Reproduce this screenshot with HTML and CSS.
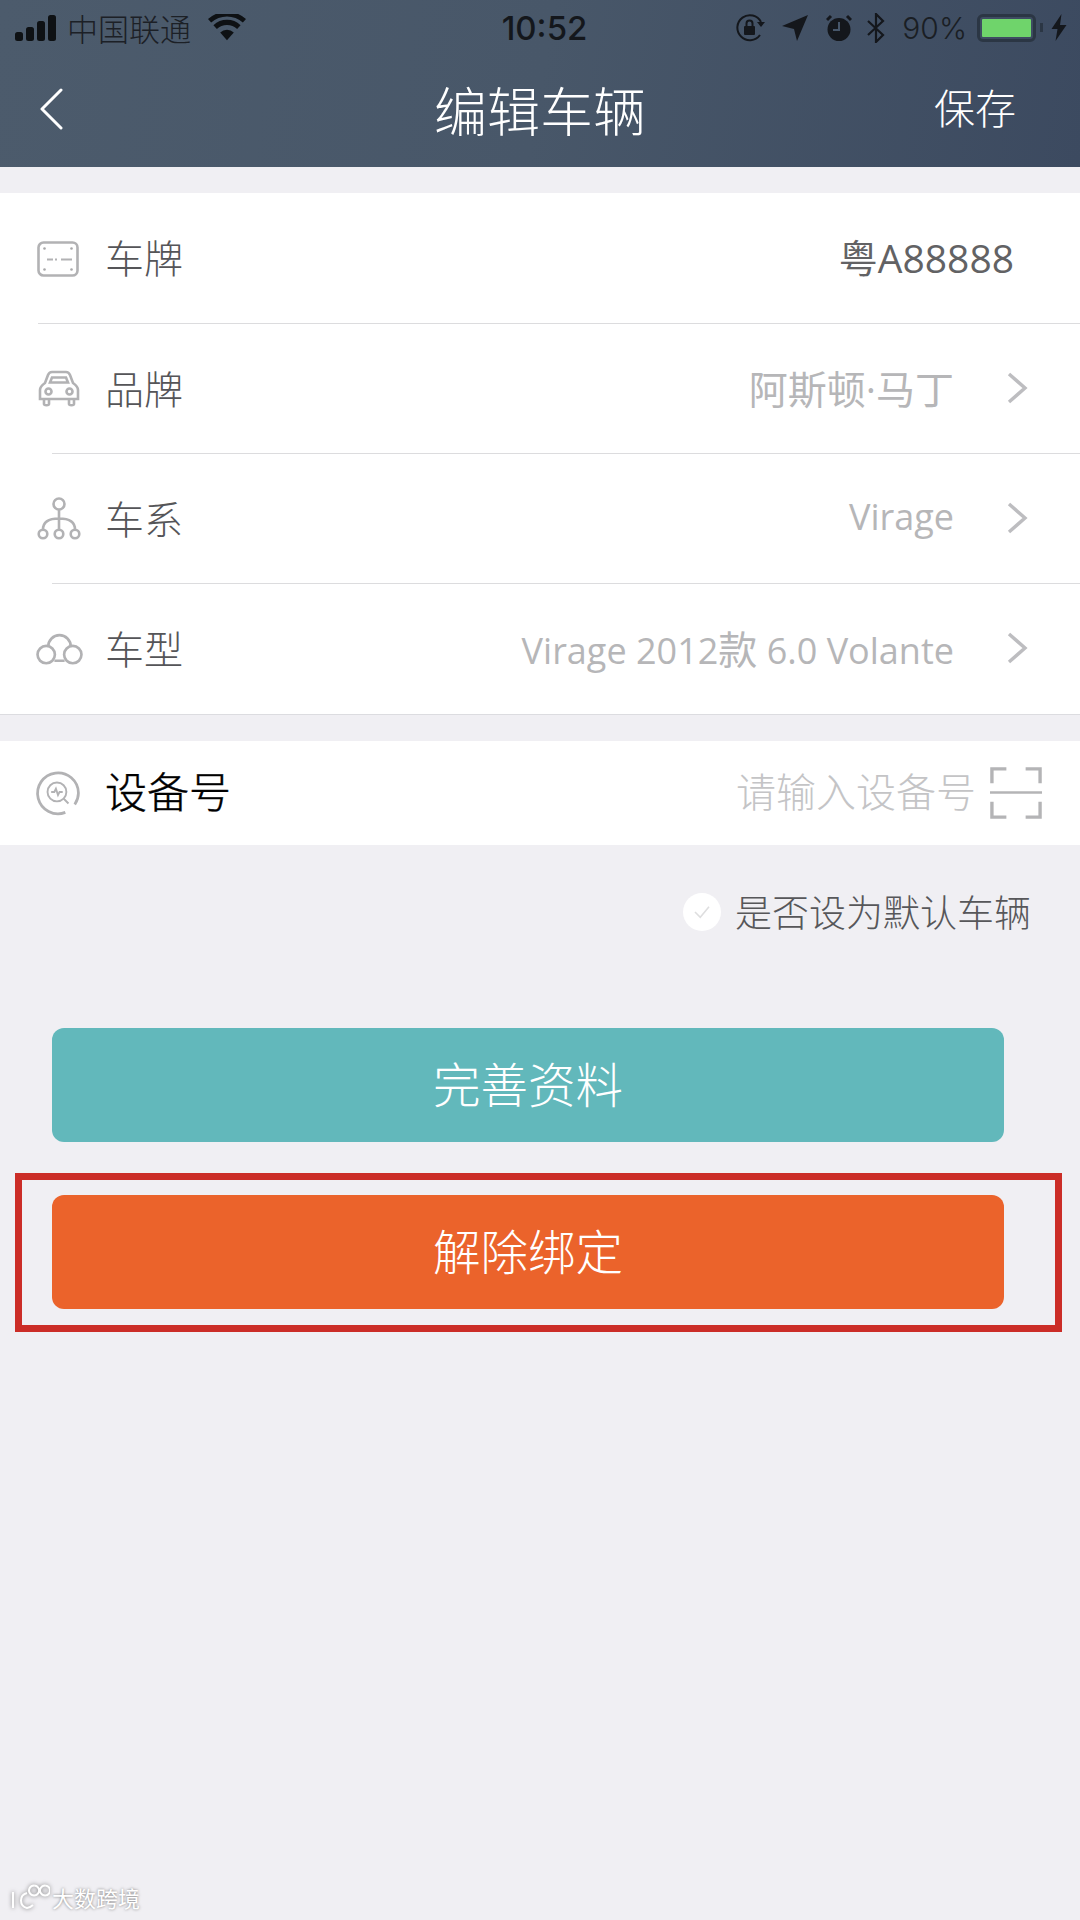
FILE: index.html
```html
<!DOCTYPE html>
<html lang="zh-CN">
<head>
<meta charset="utf-8">
<title>编辑车辆</title>
<link rel="stylesheet" href="styles.css">
</head>
<body>
<div class="page">
  <header class="header">
    <div class="status">
      <div class="status-left">
        <svg class="sig" viewBox="0 0 42 26"><rect x="0" y="17" width="8" height="9" rx="2.5"/><rect x="11" y="12" width="8" height="14" rx="2.5"/><rect x="22" y="6" width="8" height="20" rx="2.5"/><rect x="33" y="0" width="8" height="26" rx="2.5"/></svg>
        <span class="carrier">中国联通</span>
        <svg class="wifi" viewBox="0 0 42 28"><path d="M21 28 13.5 19.5a11 11 0 0 1 15 0Z"/><path d="M9.8 15.6 6 11.4a22 22 0 0 1 30 0l-3.8 4.2a16.500 16.500 0 0 0-22.400 0Z"/><path d="M3.500 8.500 0 4.700a31 31 0 0 1 42 0l-3.500 3.800a26 26 0 0 0-35 0Z"/></svg>
      </div>
      <div class="time">10:52</div>
      <div class="status-right">
        <svg class="st-lock" viewBox="0 0 30 28"><path d="M24 21A12.500 12.500 0 1 1 25 8" fill="none" stroke="#14171c" stroke-width="2"/><path d="M21 8h8l-4 5Z" fill="#14171c"/><rect x="8" y="12" width="11" height="9" rx="1" fill="#14171c"/><path d="M10.500 12V9.500a3 3 0 0 1 6 0V12" fill="none" stroke="#14171c" stroke-width="2"/></svg>
        <svg class="st-loc" viewBox="0 0 26 26"><path d="M26 0 0 11l12 3 3 12Z" fill="#14171c"/></svg>
        <svg class="st-alarm" viewBox="0 0 26 28"><circle cx="13" cy="15.500" r="11.500" fill="#14171c"/><path d="M13 8v8H7" fill="none" stroke="#46566a" stroke-width="2"/><path d="M1 6 5 2M25 6l-4-4" stroke="#14171c" stroke-width="3"/></svg>
        <svg class="st-bt" viewBox="0 0 18 30"><path d="M1 8l15 14-7 7V1l7 7L1 22" fill="none" stroke="#14171c" stroke-width="2.200"/></svg>
        <span class="pct">90%</span>
        <span class="battery"><span class="battery-fill"></span></span>
        <span class="battery-tip"></span>
        <svg class="st-bolt" viewBox="0 0 15 27"><path d="M10 0 0 15h6L4 27l11-16H8.500Z" fill="#14171c"/></svg>
      </div>
    </div>
    <nav class="nav">
      <svg class="back" viewBox="0 0 24 42"><path d="M22 2 3 21l19 19" fill="none" stroke="#fff" stroke-width="3" stroke-linecap="round" stroke-linejoin="round"/></svg>
      <h1 class="title">编辑车辆</h1>
      <span class="save">保存</span>
    </nav>
  </header>

  <section class="card card-top">
    <div class="row row-first">
      <svg class="ico" viewBox="0 0 44 36"><rect x="1.500" y="1.500" width="39" height="33" rx="5" class="ln"/><path d="M10 18.500h6M18 18.500h2M24 18.500h11" class="ln-thin"/><circle cx="7.500" cy="7.500" r="1.300" class="dot"/><circle cx="34.500" cy="7.500" r="1.300" class="dot"/><circle cx="7.500" cy="28.500" r="1.300" class="dot"/><circle cx="34.500" cy="28.500" r="1.300" class="dot"/></svg>
      <span class="label">车牌</span>
      <span class="value value-dark">粤A88888</span>
    </div>
    <div class="row row-b">
      <svg class="ico" viewBox="0 0 44 36"><path d="M3 28V19c0-3 2-5 5-7l3-8c.8-2 2-3 4-3h14c2 0 3.200 1 4 3l3 8c3 2 5 4 5 7v9H3Z" class="ln"/><path d="M13 11.500 15 6.500h14l2 5Z" class="ln"/><circle cx="11.500" cy="20.500" r="3" class="ln"/><circle cx="32.500" cy="20.500" r="3" class="ln"/><path d="M7 28v5c0 1.500 5 1.500 5 0v-5M32 28v5c0 1.500 5 1.500 5 0v-5" class="ln"/></svg>
      <span class="label">品牌</span>
      <span class="value value-cjk">阿斯顿·马丁</span>
      <svg class="chev" viewBox="0 0 22 32"><path d="M3 2 19 16 3 30" fill="none" stroke="#bdbdc0" stroke-width="3.400"/></svg>
    </div>
    <div class="row row-c">
      <svg class="ico ico-lg" viewBox="0 0 44 44"><circle cx="22" cy="7" r="5.500" class="ln"/><circle cx="6" cy="37" r="4.300" class="ln"/><circle cx="22" cy="37" r="4.300" class="ln"/><circle cx="38" cy="37" r="4.300" class="ln"/><path d="M22 12.500v20M6 32.500c0-8 7-11 16-11s16 3 16 11" class="ln"/></svg>
      <span class="label">车系</span>
      <span class="value">Virage</span>
      <svg class="chev" viewBox="0 0 22 32"><path d="M3 2 19 16 3 30" fill="none" stroke="#bdbdc0" stroke-width="3.400"/></svg>
    </div>
    <div class="row row-d">
      <svg class="ico ico-wide" viewBox="0 0 46 32"><circle cx="10" cy="21" r="8.500" class="ln"/><circle cx="36" cy="21" r="8.500" class="ln"/><path d="M12 13a11 11 0 0 1 22 0M18 27h10" class="ln"/></svg>
      <span class="label">车型</span>
      <span class="value">Virage 2012<span class="value-cjk">款</span> 6.0 Volante</span>
      <svg class="chev" viewBox="0 0 22 32"><path d="M3 2 19 16 3 30" fill="none" stroke="#bdbdc0" stroke-width="3.400"/></svg>
    </div>
  </section>

  <section class="card device">
    <svg class="ico ico-lg" viewBox="0 0 42 42"><path d="M28 39.500A19.500 19.500 0 1 1 40.500 21c0 5-1.500 8-3.500 11" class="ln"/><circle cx="20" cy="20" r="9" class="ln-thin"/><path d="M26.500 26.500 31 31M14.500 20h3l1.500-3 2 6 1.500-3h3" class="ln-thin"/></svg>
    <span class="device-label">设备号</span>
    <span class="placeholder">请输入设备号</span>
    <svg class="scan" viewBox="0 0 54 54"><path d="M17 2H2v15M37 2h15v15M17 52H2V36M37 52h15V36" fill="none" stroke="#b4b4b6" stroke-width="3.500"/><path d="M0 26.500h54" stroke="#b4b4b6" stroke-width="2.500"/></svg>
  </section>

  <div class="default">
    <span class="check"><svg viewBox="0 0 20 16"><path d="M2 8l6 6L18 2" fill="none" stroke="#dededf" stroke-width="1.800"/></svg></span>
    <span class="default-label">是否设为默认车辆</span>
  </div>

  <div class="btn btn-teal">完善资料</div>
  <div class="highlight">
    <div class="btn btn-orange">解除绑定</div>
  </div>

  <div class="watermark">
    <svg viewBox="0 0 40 26"><path d="M3 8v16M17 9C9 11 9 22 17 24a11 11 0 0 0 6-3M24 1.500a5 5 0 1 0 .1 0M35 1.500a5 5 0 1 0 .1 0" fill="none" stroke="#fff" stroke-width="2"/></svg>
    <span>大数跨境</span>
  </div>
</div>
</body>
</html>
```
FILE: styles.css
```css
* { box-sizing: border-box; }
html, body { margin: 0; padding: 0; }
body {
  width: 1080px;
  height: 1920px;
  overflow: hidden;
  background: #f0eff3;
  font-family: "Noto Sans CJK SC", "Noto Sans", sans-serif;
}
.page { position: relative; width: 1080px; height: 1920px; display: flex; flex-direction: column; }

.header {
  height: 167px;
  background: linear-gradient(100deg, #4c5b6c 0%, #485769 50%, #3c4a60 100%);
  flex: none;
}
.status {
  height: 55px;
  display: grid;
  grid-template-columns: 1fr auto 1fr;
  align-items: center;
  padding: 0 0 0 15px;
  color: #14171c;
}
.status-left { display: flex; align-items: center; }
.sig { width: 42px; height: 26px; fill: #0e1114; }
.carrier { margin-left: 10px; font-size: 31px; line-height: 40px; color: #1c2026; font-weight: 300; }
.wifi { width: 38px; height: 27px; margin-left: 17px; fill: #0e1114; }
.time { font-family: "Inter", "Liberation Sans", sans-serif; font-size: 33px; font-weight: 500; margin-right: 6px; color: #14171c; }
.status-right { display: flex; align-items: center; justify-content: flex-end; padding-right: 13px; }
.st-lock { width: 30px; height: 28px; }
.st-loc { width: 26px; height: 26px; margin-left: 16px; }
.st-alarm { width: 26px; height: 28px; margin-left: 18px; }
.st-bt { width: 18px; height: 30px; margin-left: 15px; }
.pct { font-family: "Inter", "Liberation Sans", sans-serif; font-size: 30px; margin-left: 17px; color: #1a1e24; font-weight: 300; }
.battery { width: 59px; height: 28px; margin-left: 10px; border: 3px solid #2b3644; border-radius: 6px; padding: 2px; display: flex; }
.battery-fill { flex: 1; background: #6fd46b; border-radius: 1px; }
.battery-tip { width: 3px; height: 9px; background: #2b3644; margin-left: 4px; }
.st-bolt { width: 16px; height: 27px; margin-left: 8px; }

.nav {
  position: relative;
  height: 112px;
  display: flex;
  align-items: center;
  justify-content: space-between;
  padding: 0 64px 5px 39px;
  color: #fff;
}
.back { width: 24px; height: 42px; }
.title {
  position: absolute;
  left: 0; right: 0; top: 21px;
  margin: 0;
  text-align: center;
  font-size: 53px;
  line-height: 66px;
  font-weight: 300;
}
.save { font-size: 41px; line-height: 56px; font-weight: 300; padding-bottom: 5px; }

.card { background: #fff; }
.card-top { margin-top: 26px; border-bottom: 1px solid #dcdce0; flex: none; }
.row {
  height: 130px;
  display: flex;
  align-items: center;
  padding: 0 53px 0 37px;
  position: relative;
}
.row-first { height: 131px; padding-right: 66px; }
.row-first::after, .row-b::after, .row-c::after {
  content: "";
  position: absolute;
  right: 0;
  bottom: 0;
  height: 1px;
  background: #dcdcde;
}
.row-first::after { left: 38px; }
.row-b::after, .row-c::after { left: 52px; }
.ico { width: 44px; height: 40px; flex: none; overflow: visible; }
.ico-lg { height: 44px; }
.ico-wide { width: 47px; height: 33px; margin-left: -1px; margin-right: -2px; }
.ln { fill: none; stroke: #b2b2b4; stroke-width: 2.600; }
.ln-thin { fill: none; stroke: #b2b2b4; stroke-width: 1.800; }
.dot { fill: #a8a8aa; }
.label { margin-left: 24px; font-size: 39px; line-height: 50px; color: #555558; font-weight: 300; padding-bottom: 5px; }
.value {
  margin-left: auto;
  font-family: "Open Sans", "Noto Sans CJK SC", sans-serif;
  font-size: 36px;
  color: #b6b6b8;
  padding-bottom: 5px;
}
.value-dark { color: #626264; font-size: 39px; }
.value-cjk { font-size: 39px; }
.chev { width: 22px; height: 32px; margin: 0 -1px 2px 52px; flex: none; }

.device {
  margin-top: 26px;
  height: 104px;
  display: flex;
  align-items: center;
  padding: 0 38px 0 36px;
  flex: none;
}
.device-label { margin-left: 25px; font-size: 42px; line-height: 56px; color: #000; font-weight: 300; -webkit-text-stroke: 0.4px #000; padding-bottom: 7px; }
.placeholder { margin-left: auto; font-size: 40px; line-height: 50px; color: #c4c4c6; font-weight: 300; padding-bottom: 7px; }
.scan { width: 52px; height: 52px; margin-left: 14px; flex: none; }

.default {
  height: 54px;
  margin-top: 41px;
  display: flex;
  align-items: center;
  justify-content: flex-end;
  padding-right: 49px;
  flex: none;
}
.check {
  width: 38px; height: 38px;
  border-radius: 50%;
  background: #fff;
  display: flex;
  align-items: center;
  justify-content: center;
  margin-bottom: 2px;
}
.check svg { width: 18px; height: 14px; }
.default-label { margin-left: 14px; font-size: 37px; line-height: 50px; color: #57575a; font-weight: 300; padding-bottom: 4px; }

.btn {
  height: 114px;
  border-radius: 12px;
  display: flex;
  align-items: center;
  justify-content: center;
  color: #fff;
  font-size: 47.500px;
  font-weight: 300;
  padding-bottom: 6px;
  flex: none;
}
.btn-teal { width: 952px; margin: 88px 0 0 52px; background: #62b8bb; }
.highlight {
  width: 1047px;
  height: 159px;
  margin: 31px 0 0 15px;
  padding: 15px 0 0 30px;
  border: 7px solid #cb2d27;
  flex: none;
}
.btn-orange { width: 952px; background: #eb632b; }

.watermark {
  position: absolute;
  left: 10px;
  bottom: 8px;
  display: flex;
  align-items: center;
  color: #fff;
  font-size: 22px;
  line-height: 30px;
  text-shadow: 0 0 3px #777;
}
.watermark svg { width: 40px; height: 26px; filter: drop-shadow(0 0 2px #777); }
.watermark span { margin-left: 2px; }
```
